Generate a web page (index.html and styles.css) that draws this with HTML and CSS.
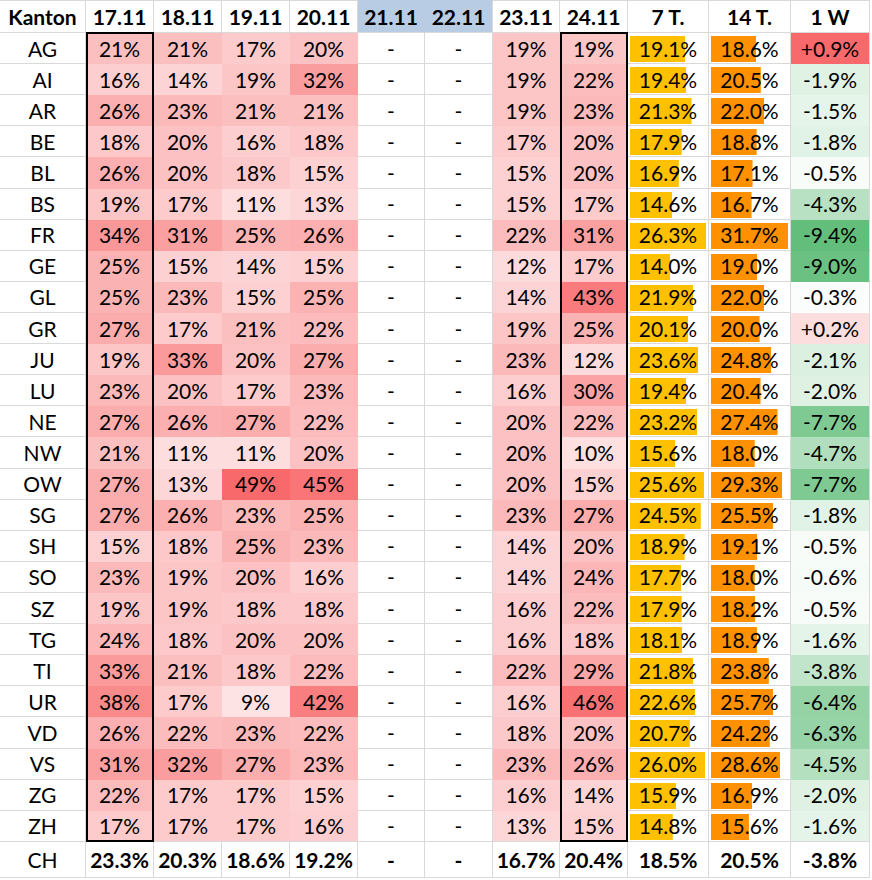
FILE: index.html
```html
<!DOCTYPE html>
<html lang="de">
<head>
<meta charset="utf-8">
<title>Positivitätsrate Kantone</title>
<link rel="stylesheet" href="styles.css">
</head>
<body>
<div class="sheet">
  <div class="hd">Kanton</div><div class="hd">17.11</div><div class="hd">18.11</div><div class="hd">19.11</div><div class="hd">20.11</div><div class="hd wk">21.11</div><div class="hd wk wk2">22.11</div><div class="hd">23.11</div><div class="hd">24.11</div><div class="hd">7 T.</div><div class="hd">14 T.</div><div class="hd">1 W</div>

  <div>AG</div><div class="h bx top" style="--v:21">21%</div><div class="h" style="--v:21">21%</div><div class="h" style="--v:17">17%</div><div class="h" style="--v:20">20%</div><div>-</div><div>-</div><div class="h" style="--v:19">19%</div><div class="h bx top" style="--v:19">19%</div><div class="b7" style="--v:19.1">19.1%</div><div class="b14" style="--v:18.6">18.6%</div><div class="pos" style="--v:0.9">+0.9%</div>

  <div>AI</div><div class="h bx" style="--v:16">16%</div><div class="h" style="--v:14">14%</div><div class="h" style="--v:19">19%</div><div class="h" style="--v:32">32%</div><div>-</div><div>-</div><div class="h" style="--v:19">19%</div><div class="h bx" style="--v:22">22%</div><div class="b7" style="--v:19.4">19.4%</div><div class="b14" style="--v:20.5">20.5%</div><div class="neg" style="--v:1.9">-1.9%</div>

  <div>AR</div><div class="h bx" style="--v:26">26%</div><div class="h" style="--v:23">23%</div><div class="h" style="--v:21">21%</div><div class="h" style="--v:21">21%</div><div>-</div><div>-</div><div class="h" style="--v:19">19%</div><div class="h bx" style="--v:23">23%</div><div class="b7" style="--v:21.3">21.3%</div><div class="b14" style="--v:22.0">22.0%</div><div class="neg" style="--v:1.5">-1.5%</div>

  <div>BE</div><div class="h bx" style="--v:18">18%</div><div class="h" style="--v:20">20%</div><div class="h" style="--v:16">16%</div><div class="h" style="--v:18">18%</div><div>-</div><div>-</div><div class="h" style="--v:17">17%</div><div class="h bx" style="--v:20">20%</div><div class="b7" style="--v:17.9">17.9%</div><div class="b14" style="--v:18.8">18.8%</div><div class="neg" style="--v:1.8">-1.8%</div>

  <div>BL</div><div class="h bx" style="--v:26">26%</div><div class="h" style="--v:20">20%</div><div class="h" style="--v:18">18%</div><div class="h" style="--v:15">15%</div><div>-</div><div>-</div><div class="h" style="--v:15">15%</div><div class="h bx" style="--v:20">20%</div><div class="b7" style="--v:16.9">16.9%</div><div class="b14" style="--v:17.1">17.1%</div><div class="neg" style="--v:0.5">-0.5%</div>

  <div>BS</div><div class="h bx" style="--v:19">19%</div><div class="h" style="--v:17">17%</div><div class="h" style="--v:11">11%</div><div class="h" style="--v:13">13%</div><div>-</div><div>-</div><div class="h" style="--v:15">15%</div><div class="h bx" style="--v:17">17%</div><div class="b7" style="--v:14.6">14.6%</div><div class="b14" style="--v:16.7">16.7%</div><div class="neg" style="--v:4.3">-4.3%</div>

  <div>FR</div><div class="h bx" style="--v:34">34%</div><div class="h" style="--v:31">31%</div><div class="h" style="--v:25">25%</div><div class="h" style="--v:26">26%</div><div>-</div><div>-</div><div class="h" style="--v:22">22%</div><div class="h bx" style="--v:31">31%</div><div class="b7" style="--v:26.3">26.3%</div><div class="b14" style="--v:31.7">31.7%</div><div class="neg" style="--v:9.4">-9.4%</div>

  <div>GE</div><div class="h bx" style="--v:25">25%</div><div class="h" style="--v:15">15%</div><div class="h" style="--v:14">14%</div><div class="h" style="--v:15">15%</div><div>-</div><div>-</div><div class="h" style="--v:12">12%</div><div class="h bx" style="--v:17">17%</div><div class="b7" style="--v:14.0">14.0%</div><div class="b14" style="--v:19.0">19.0%</div><div class="neg" style="--v:9.0">-9.0%</div>

  <div>GL</div><div class="h bx" style="--v:25">25%</div><div class="h" style="--v:23">23%</div><div class="h" style="--v:15">15%</div><div class="h" style="--v:25">25%</div><div>-</div><div>-</div><div class="h" style="--v:14">14%</div><div class="h bx" style="--v:43">43%</div><div class="b7" style="--v:21.9">21.9%</div><div class="b14" style="--v:22.0">22.0%</div><div class="neg" style="--v:0.3">-0.3%</div>

  <div>GR</div><div class="h bx" style="--v:27">27%</div><div class="h" style="--v:17">17%</div><div class="h" style="--v:21">21%</div><div class="h" style="--v:22">22%</div><div>-</div><div>-</div><div class="h" style="--v:19">19%</div><div class="h bx" style="--v:25">25%</div><div class="b7" style="--v:20.1">20.1%</div><div class="b14" style="--v:20.0">20.0%</div><div class="pos" style="--v:0.2">+0.2%</div>

  <div>JU</div><div class="h bx" style="--v:19">19%</div><div class="h" style="--v:33">33%</div><div class="h" style="--v:20">20%</div><div class="h" style="--v:27">27%</div><div>-</div><div>-</div><div class="h" style="--v:23">23%</div><div class="h bx" style="--v:12">12%</div><div class="b7" style="--v:23.6">23.6%</div><div class="b14" style="--v:24.8">24.8%</div><div class="neg" style="--v:2.1">-2.1%</div>

  <div>LU</div><div class="h bx" style="--v:23">23%</div><div class="h" style="--v:20">20%</div><div class="h" style="--v:17">17%</div><div class="h" style="--v:23">23%</div><div>-</div><div>-</div><div class="h" style="--v:16">16%</div><div class="h bx" style="--v:30">30%</div><div class="b7" style="--v:19.4">19.4%</div><div class="b14" style="--v:20.4">20.4%</div><div class="neg" style="--v:2.0">-2.0%</div>

  <div>NE</div><div class="h bx" style="--v:27">27%</div><div class="h" style="--v:26">26%</div><div class="h" style="--v:27">27%</div><div class="h" style="--v:22">22%</div><div>-</div><div>-</div><div class="h" style="--v:20">20%</div><div class="h bx" style="--v:22">22%</div><div class="b7" style="--v:23.2">23.2%</div><div class="b14" style="--v:27.4">27.4%</div><div class="neg" style="--v:7.7">-7.7%</div>

  <div>NW</div><div class="h bx" style="--v:21">21%</div><div class="h" style="--v:11">11%</div><div class="h" style="--v:11">11%</div><div class="h" style="--v:20">20%</div><div>-</div><div>-</div><div class="h" style="--v:20">20%</div><div class="h bx" style="--v:10">10%</div><div class="b7" style="--v:15.6">15.6%</div><div class="b14" style="--v:18.0">18.0%</div><div class="neg" style="--v:4.7">-4.7%</div>

  <div>OW</div><div class="h bx" style="--v:27">27%</div><div class="h" style="--v:13">13%</div><div class="h" style="--v:49">49%</div><div class="h" style="--v:45">45%</div><div>-</div><div>-</div><div class="h" style="--v:20">20%</div><div class="h bx" style="--v:15">15%</div><div class="b7" style="--v:25.6">25.6%</div><div class="b14" style="--v:29.3">29.3%</div><div class="neg" style="--v:7.7">-7.7%</div>

  <div>SG</div><div class="h bx" style="--v:27">27%</div><div class="h" style="--v:26">26%</div><div class="h" style="--v:23">23%</div><div class="h" style="--v:25">25%</div><div>-</div><div>-</div><div class="h" style="--v:23">23%</div><div class="h bx" style="--v:27">27%</div><div class="b7" style="--v:24.5">24.5%</div><div class="b14" style="--v:25.5">25.5%</div><div class="neg" style="--v:1.8">-1.8%</div>

  <div>SH</div><div class="h bx" style="--v:15">15%</div><div class="h" style="--v:18">18%</div><div class="h" style="--v:25">25%</div><div class="h" style="--v:23">23%</div><div>-</div><div>-</div><div class="h" style="--v:14">14%</div><div class="h bx" style="--v:20">20%</div><div class="b7" style="--v:18.9">18.9%</div><div class="b14" style="--v:19.1">19.1%</div><div class="neg" style="--v:0.5">-0.5%</div>

  <div>SO</div><div class="h bx" style="--v:23">23%</div><div class="h" style="--v:19">19%</div><div class="h" style="--v:20">20%</div><div class="h" style="--v:16">16%</div><div>-</div><div>-</div><div class="h" style="--v:14">14%</div><div class="h bx" style="--v:24">24%</div><div class="b7" style="--v:17.7">17.7%</div><div class="b14" style="--v:18.0">18.0%</div><div class="neg" style="--v:0.6">-0.6%</div>

  <div>SZ</div><div class="h bx" style="--v:19">19%</div><div class="h" style="--v:19">19%</div><div class="h" style="--v:18">18%</div><div class="h" style="--v:18">18%</div><div>-</div><div>-</div><div class="h" style="--v:16">16%</div><div class="h bx" style="--v:22">22%</div><div class="b7" style="--v:17.9">17.9%</div><div class="b14" style="--v:18.2">18.2%</div><div class="neg" style="--v:0.5">-0.5%</div>

  <div>TG</div><div class="h bx" style="--v:24">24%</div><div class="h" style="--v:18">18%</div><div class="h" style="--v:20">20%</div><div class="h" style="--v:20">20%</div><div>-</div><div>-</div><div class="h" style="--v:16">16%</div><div class="h bx" style="--v:18">18%</div><div class="b7" style="--v:18.1">18.1%</div><div class="b14" style="--v:18.9">18.9%</div><div class="neg" style="--v:1.6">-1.6%</div>

  <div>TI</div><div class="h bx" style="--v:33">33%</div><div class="h" style="--v:21">21%</div><div class="h" style="--v:18">18%</div><div class="h" style="--v:22">22%</div><div>-</div><div>-</div><div class="h" style="--v:22">22%</div><div class="h bx" style="--v:29">29%</div><div class="b7" style="--v:21.8">21.8%</div><div class="b14" style="--v:23.8">23.8%</div><div class="neg" style="--v:3.8">-3.8%</div>

  <div>UR</div><div class="h bx" style="--v:38">38%</div><div class="h" style="--v:17">17%</div><div class="h" style="--v:9">9%</div><div class="h" style="--v:42">42%</div><div>-</div><div>-</div><div class="h" style="--v:16">16%</div><div class="h bx" style="--v:46">46%</div><div class="b7" style="--v:22.6">22.6%</div><div class="b14" style="--v:25.7">25.7%</div><div class="neg" style="--v:6.4">-6.4%</div>

  <div>VD</div><div class="h bx" style="--v:26">26%</div><div class="h" style="--v:22">22%</div><div class="h" style="--v:23">23%</div><div class="h" style="--v:22">22%</div><div>-</div><div>-</div><div class="h" style="--v:18">18%</div><div class="h bx" style="--v:20">20%</div><div class="b7" style="--v:20.7">20.7%</div><div class="b14" style="--v:24.2">24.2%</div><div class="neg" style="--v:6.3">-6.3%</div>

  <div>VS</div><div class="h bx" style="--v:31">31%</div><div class="h" style="--v:32">32%</div><div class="h" style="--v:27">27%</div><div class="h" style="--v:23">23%</div><div>-</div><div>-</div><div class="h" style="--v:23">23%</div><div class="h bx" style="--v:26">26%</div><div class="b7" style="--v:26.0">26.0%</div><div class="b14" style="--v:28.6">28.6%</div><div class="neg" style="--v:4.5">-4.5%</div>

  <div>ZG</div><div class="h bx" style="--v:22">22%</div><div class="h" style="--v:17">17%</div><div class="h" style="--v:17">17%</div><div class="h" style="--v:15">15%</div><div>-</div><div>-</div><div class="h" style="--v:16">16%</div><div class="h bx" style="--v:14">14%</div><div class="b7" style="--v:15.9">15.9%</div><div class="b14" style="--v:16.9">16.9%</div><div class="neg" style="--v:2.0">-2.0%</div>

  <div class="last">ZH</div><div class="h bx bot last" style="--v:17">17%</div><div class="h last" style="--v:17">17%</div><div class="h last" style="--v:17">17%</div><div class="h last" style="--v:16">16%</div><div class="last">-</div><div class="last">-</div><div class="h last" style="--v:13">13%</div><div class="h bx bot last" style="--v:15">15%</div><div class="b7 last" style="--v:14.8">14.8%</div><div class="b14 last" style="--v:15.6">15.6%</div><div class="neg last" style="--v:1.6">-1.6%</div>

  <div>CH</div><div class="tot">23.3%</div><div class="tot">20.3%</div><div class="tot">18.6%</div><div class="tot">19.2%</div><div class="tot">-</div><div class="tot">-</div><div class="tot">16.7%</div><div class="tot">20.4%</div><div class="tot">18.5%</div><div class="tot">20.5%</div><div class="tot">-3.8%</div>
</div>
</body>
</html>
```
FILE: styles.css
```css
html, body {
  margin: 0;
  padding: 0;
  background: #ffffff;
}

body {
  font-family: Lato, "Open Sans", "Liberation Sans", sans-serif;
  color: #000000;
}

.sheet {
  display: grid;
  grid-template-columns: 86px 68px 68px 68px 68px 67px 68px 67px 68px 81px 82px 79px;
  grid-template-rows: 33px repeat(26, 31.115px) 36px;
  width: 870px;
}

.sheet > div {
  box-sizing: border-box;
  display: flex;
  align-items: center;
  justify-content: center;
  font-size: 21px;
  line-height: 1;
  border-right: 1px solid #d9d9d9;
  border-bottom: 1px solid #d9d9d9;
  white-space: nowrap;
}

.sheet > .hd {
  font-weight: 700;
  border-top: 1px solid #d9d9d9;
}

.sheet > .wk {
  background: #b8cce4;
  border-top-color: #b8cce4;
  border-right-color: #b8cce4;
}

.sheet > .wk2 {
  border-right-color: #d9d9d9;
}

.sheet > .tot {
  font-weight: 700;
}

/* white -> red colour scale, 0 .. 49 % */
.sheet > .h {
  --f: calc(var(--v) / 49);
  --c: rgb(calc(255 - 7 * var(--f)), calc(255 - 150 * var(--f)), calc(255 - 148 * var(--f)));
  background: var(--c);
  border-right-color: var(--c);
  border-bottom-color: var(--c);
}

.sheet > .h.last {
  border-bottom-color: #d9d9d9;
}

/* 1 W: white -> red for increases */
.sheet > .pos {
  --f: calc(var(--v) / 0.9);
  --c: rgb(calc(255 - 7 * var(--f)), calc(255 - 150 * var(--f)), calc(255 - 148 * var(--f)));
  background: var(--c);
  border-bottom-color: var(--c);
}

/* 1 W: white -> green for decreases */
.sheet > .neg {
  --f: calc(var(--v) / 9.4);
  --c: rgb(calc(255 - 156 * var(--f)), calc(255 - 65 * var(--f)), calc(255 - 132 * var(--f)));
  background: var(--c);
  border-bottom-color: var(--c);
}

.sheet > .neg.last {
  border-bottom-color: #d9d9d9;
}

/* data bars */
.sheet > .b7 {
  background: linear-gradient(#ffc000, #ffc000) no-repeat 2px 3px / calc(var(--v) * 76px / 26.3) calc(100% - 4px);
}

.sheet > .b14 {
  background: linear-gradient(#ff9000, #ff9000) no-repeat 2px 3px / calc(var(--v) * 77px / 31.7) calc(100% - 4px);
}

/* black outline around the 17.11 and 24.11 columns */
.sheet > .bx {
  position: relative;
}

.sheet > .bx::after {
  content: "";
  position: absolute;
  left: 0;
  right: -1px;
  top: 0;
  bottom: -1px;
  border-left: 2px solid #000;
  border-right: 2px solid #000;
  z-index: 1;
  pointer-events: none;
}

.sheet > .bx.top::after {
  top: -1px;
  border-top: 2px solid #000;
}

.sheet > .bx.bot::after {
  border-bottom: 2px solid #000;
}
```
